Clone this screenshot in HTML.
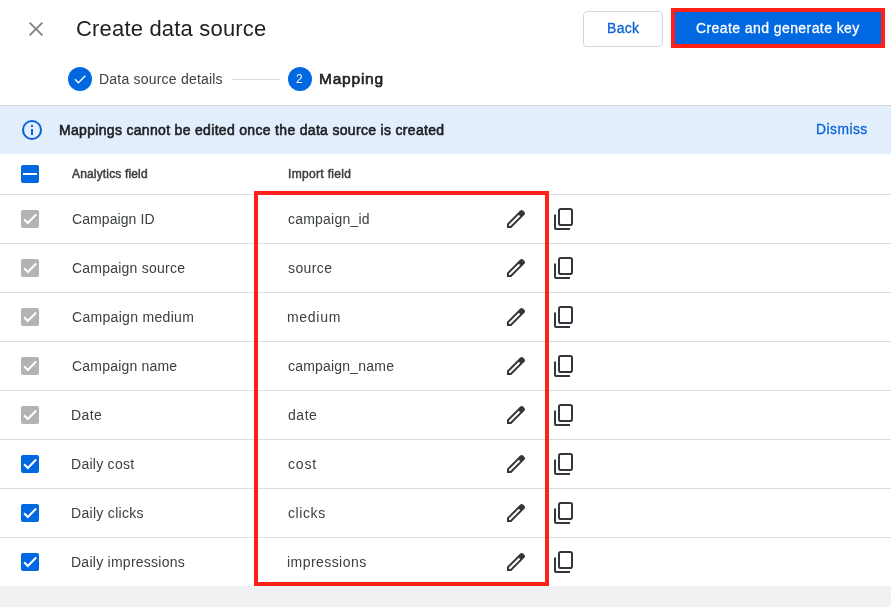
<!DOCTYPE html>
<html lang="en">
<head>
<meta charset="utf-8">
<title>Create data source</title>
<style>
*{box-sizing:border-box;margin:0;padding:0}
html,body{width:891px;height:607px;overflow:hidden;background:#eff1f3}
body{position:relative;font-family:"Liberation Sans",Arial,sans-serif;color:#202124}
.abs{position:absolute}
.t{position:absolute;white-space:nowrap;line-height:1;will-change:transform}
#top{left:0;top:0;width:891px;height:105px;background:#fff}
#title{left:77px;top:18px;font-size:22px;color:#202124}
#back{left:583px;top:11px;width:80px;height:36px;border:1px solid #d5d8dd;border-radius:4px;background:#fff}
#backt{left:608px;top:21px;font-size:14px;color:#0a62da;-webkit-text-stroke:0.3px #0a62da}
#cgk{left:671px;top:8px;width:214px;height:40px;background:#0068e1;border:4px solid #ff2018}
#cgkt{left:696px;top:21px;font-size:14px;color:#fff;-webkit-text-stroke:0.3px #fff}
.circ{width:24px;height:24px;border-radius:50%;background:#0068e1}
#s1t{left:100px;top:72px;font-size:14px;color:#3c4043}
#conn{left:232px;top:79px;width:48px;height:1px;background:#dadce0}
#s2n{left:296px;top:73px;font-size:12px;color:#fff}
#s2t{left:320px;top:71px;font-size:15.5px;-webkit-text-stroke:0.62px #202124;color:#202124}
#bannerline{left:0;top:105px;width:891px;height:1px;background:#d3d5d8}
#banner{left:0;top:106px;width:891px;height:48px;background:#e3eefc}
#bt{left:60px;top:123px;font-size:14px;-webkit-text-stroke:0.58px #202124;color:#202124}
#dis{left:816px;top:123px;font-size:13.8px;color:#0a62da;-webkit-text-stroke:0.3px #0a62da}
#table{left:0;top:154px;width:891px;height:432px;background:#fff}
.line{left:0;width:891px;height:1px;background:#dadce0}
.hdr{font-size:12px;-webkit-text-stroke:0.48px #3c4043;color:#3c4043;top:168px}
.cb{left:21px;width:18px;height:18px;border-radius:2px}
.cb.g{background:#b1b3b5}
.cb.b{background:#0068e1}
.lab{left:72px;font-size:14px;color:#3c4043}
.val{left:288px;font-size:14px;color:#3c4043}
.ic{width:24px;height:24px}
#redbox{left:254px;top:191px;width:295px;height:395px;border:4px solid #ff2018}
</style>
</head>
<body>
<div id="top" class="abs"></div>
<svg class="abs" style="left:24px;top:17px" width="24" height="24" viewBox="0 0 24 24"><path d="M5.6 5.6L18.4 18.400M18.400 5.600L5.600 18.400" stroke="#80868b" stroke-width="1.9" fill="none"/></svg>
<div id="title" class="t" style="letter-spacing:0.186px;margin-left:-1px">Create data source</div>
<div id="back" class="abs"></div>
<div id="backt" class="t" style="letter-spacing:0.299px;margin-left:-1px">Back</div>
<div id="cgk" class="abs"></div>
<div id="cgkt" class="t" style="letter-spacing:0.417px;margin-left:0px">Create and generate key</div>

<div class="abs circ" style="left:68px;top:67px"></div>
<svg class="abs" style="left:72px;top:71px" width="16" height="16" viewBox="0 0 24 24"><path d="M4.5 12.500L9.500 17.500L20 7" stroke="#fff" stroke-width="2.1" fill="none"/></svg>
<div id="s1t" class="t" style="letter-spacing:0.210px;margin-left:-1px">Data source details</div>
<div id="conn" class="abs"></div>
<div class="abs circ" style="left:288px;top:67px"></div>
<div id="s2n" class="t">2</div>
<div id="s2t" class="t" style="letter-spacing:0.776px;margin-left:-1px">Mapping</div>

<div id="bannerline" class="abs"></div>
<div id="banner" class="abs"></div>
<svg class="abs" style="left:20px;top:118px" width="24" height="24" viewBox="0 0 24 24"><circle cx="12" cy="12" r="9" fill="none" stroke="#0a62da" stroke-width="2"/><rect x="11" y="11" width="2" height="6" fill="#0a62da"/><rect x="11" y="7" width="2" height="2" fill="#0a62da"/></svg>
<div id="bt" class="t" style="letter-spacing:0.317px;margin-left:-1px">Mappings cannot be edited once the data source is created</div>
<div id="dis" class="t" style="letter-spacing:0.495px;margin-left:0px">Dismiss</div>

<div id="table" class="abs"></div>
<div class="abs cb b" style="top:165px"></div>
<div class="abs" style="left:23px;top:173px;width:14px;height:2px;background:#fff"></div>
<div id="h1" class="t hdr" style="letter-spacing:0.161px;margin-left:0px;left:72px">Analytics field</div>
<div id="h2" class="t hdr" style="letter-spacing:0.327px;margin-left:0px;left:288px">Import field</div>
<div class="abs line" style="top:194px"></div>
<div class="abs cb g" style="top:210px"></div>
<svg class="abs" style="left:21px;top:210px" width="18" height="18" viewBox="0 0 18 18"><path d="M3.100 9.300L6.800 13L15.200 4.600" fill="none" stroke="#fff" stroke-width="2.100"/></svg>
<div class="t lab" id="l0" style="top:212px;letter-spacing:0.080px;margin-left:0px">Campaign ID</div>
<div class="t val" id="v0" style="top:212px;letter-spacing:0.218px;margin-left:0px">campaign_id</div>
<svg class="abs" style="left:504px;top:207px" width="24" height="24" viewBox="0 -960 960 960"><path fill="#33363a" d="M200-200h57l391-391-57-57-391 391v57Zm-80 80v-170l528-527q12-11 26.500-17t30.500-6q16 0 31 6t26 18l55 56q12 11 17.500 26t5.500 30q0 16-5.500 30.500T817-647L290-120H120Zm640-584-56-56 56 56Zm-141 85-28-29 57 57-29-28Z"/></svg>
<svg class="abs" style="left:552px;top:207px" width="24" height="24" viewBox="0 0 24 24" fill="none" stroke="#33363a" stroke-width="2"><rect x="7" y="2" width="13" height="16" rx="1.800"/><path d="M3 7.500V21a1 1 0 0 0 1 1H18" /></svg>
<div class="abs line" style="top:243px"></div>
<div class="abs cb g" style="top:259px"></div>
<svg class="abs" style="left:21px;top:259px" width="18" height="18" viewBox="0 0 18 18"><path d="M3.100 9.300L6.800 13L15.200 4.600" fill="none" stroke="#fff" stroke-width="2.100"/></svg>
<div class="t lab" id="l1" style="top:261px;letter-spacing:0.228px;margin-left:0px">Campaign source</div>
<div class="t val" id="v1" style="top:261px;letter-spacing:0.382px;margin-left:0px">source</div>
<svg class="abs" style="left:504px;top:256px" width="24" height="24" viewBox="0 -960 960 960"><path fill="#33363a" d="M200-200h57l391-391-57-57-391 391v57Zm-80 80v-170l528-527q12-11 26.500-17t30.500-6q16 0 31 6t26 18l55 56q12 11 17.500 26t5.500 30q0 16-5.500 30.500T817-647L290-120H120Zm640-584-56-56 56 56Zm-141 85-28-29 57 57-29-28Z"/></svg>
<svg class="abs" style="left:552px;top:256px" width="24" height="24" viewBox="0 0 24 24" fill="none" stroke="#33363a" stroke-width="2"><rect x="7" y="2" width="13" height="16" rx="1.800"/><path d="M3 7.500V21a1 1 0 0 0 1 1H18" /></svg>
<div class="abs line" style="top:292px"></div>
<div class="abs cb g" style="top:308px"></div>
<svg class="abs" style="left:21px;top:308px" width="18" height="18" viewBox="0 0 18 18"><path d="M3.100 9.300L6.800 13L15.200 4.600" fill="none" stroke="#fff" stroke-width="2.100"/></svg>
<div class="t lab" id="l2" style="top:310px;letter-spacing:0.308px;margin-left:0px">Campaign medium</div>
<div class="t val" id="v2" style="top:310px;letter-spacing:0.707px;margin-left:-1px">medium</div>
<svg class="abs" style="left:504px;top:305px" width="24" height="24" viewBox="0 -960 960 960"><path fill="#33363a" d="M200-200h57l391-391-57-57-391 391v57Zm-80 80v-170l528-527q12-11 26.500-17t30.500-6q16 0 31 6t26 18l55 56q12 11 17.500 26t5.500 30q0 16-5.500 30.500T817-647L290-120H120Zm640-584-56-56 56 56Zm-141 85-28-29 57 57-29-28Z"/></svg>
<svg class="abs" style="left:552px;top:305px" width="24" height="24" viewBox="0 0 24 24" fill="none" stroke="#33363a" stroke-width="2"><rect x="7" y="2" width="13" height="16" rx="1.800"/><path d="M3 7.500V21a1 1 0 0 0 1 1H18" /></svg>
<div class="abs line" style="top:341px"></div>
<div class="abs cb g" style="top:357px"></div>
<svg class="abs" style="left:21px;top:357px" width="18" height="18" viewBox="0 0 18 18"><path d="M3.100 9.300L6.800 13L15.200 4.600" fill="none" stroke="#fff" stroke-width="2.100"/></svg>
<div class="t lab" id="l3" style="top:359px;letter-spacing:0.200px;margin-left:0px">Campaign name</div>
<div class="t val" id="v3" style="top:359px;letter-spacing:0.202px;margin-left:0px">campaign_name</div>
<svg class="abs" style="left:504px;top:354px" width="24" height="24" viewBox="0 -960 960 960"><path fill="#33363a" d="M200-200h57l391-391-57-57-391 391v57Zm-80 80v-170l528-527q12-11 26.500-17t30.500-6q16 0 31 6t26 18l55 56q12 11 17.500 26t5.500 30q0 16-5.500 30.500T817-647L290-120H120Zm640-584-56-56 56 56Zm-141 85-28-29 57 57-29-28Z"/></svg>
<svg class="abs" style="left:552px;top:354px" width="24" height="24" viewBox="0 0 24 24" fill="none" stroke="#33363a" stroke-width="2"><rect x="7" y="2" width="13" height="16" rx="1.800"/><path d="M3 7.500V21a1 1 0 0 0 1 1H18" /></svg>
<div class="abs line" style="top:390px"></div>
<div class="abs cb g" style="top:406px"></div>
<svg class="abs" style="left:21px;top:406px" width="18" height="18" viewBox="0 0 18 18"><path d="M3.100 9.300L6.800 13L15.200 4.600" fill="none" stroke="#fff" stroke-width="2.100"/></svg>
<div class="t lab" id="l4" style="top:408px;letter-spacing:0.374px;margin-left:-1px">Date</div>
<div class="t val" id="v4" style="top:408px;letter-spacing:0.533px;margin-left:0px">date</div>
<svg class="abs" style="left:504px;top:403px" width="24" height="24" viewBox="0 -960 960 960"><path fill="#33363a" d="M200-200h57l391-391-57-57-391 391v57Zm-80 80v-170l528-527q12-11 26.500-17t30.500-6q16 0 31 6t26 18l55 56q12 11 17.500 26t5.500 30q0 16-5.500 30.500T817-647L290-120H120Zm640-584-56-56 56 56Zm-141 85-28-29 57 57-29-28Z"/></svg>
<svg class="abs" style="left:552px;top:403px" width="24" height="24" viewBox="0 0 24 24" fill="none" stroke="#33363a" stroke-width="2"><rect x="7" y="2" width="13" height="16" rx="1.800"/><path d="M3 7.500V21a1 1 0 0 0 1 1H18" /></svg>
<div class="abs line" style="top:439px"></div>
<div class="abs cb b" style="top:455px"></div>
<svg class="abs" style="left:21px;top:455px" width="18" height="18" viewBox="0 0 18 18"><path d="M3.100 9.300L6.800 13L15.200 4.600" fill="none" stroke="#fff" stroke-width="2.100"/></svg>
<div class="t lab" id="l5" style="top:457px;letter-spacing:0.267px;margin-left:-1px">Daily cost</div>
<div class="t val" id="v5" style="top:457px;letter-spacing:0.838px;margin-left:0px">cost</div>
<svg class="abs" style="left:504px;top:452px" width="24" height="24" viewBox="0 -960 960 960"><path fill="#33363a" d="M200-200h57l391-391-57-57-391 391v57Zm-80 80v-170l528-527q12-11 26.500-17t30.500-6q16 0 31 6t26 18l55 56q12 11 17.500 26t5.500 30q0 16-5.500 30.500T817-647L290-120H120Zm640-584-56-56 56 56Zm-141 85-28-29 57 57-29-28Z"/></svg>
<svg class="abs" style="left:552px;top:452px" width="24" height="24" viewBox="0 0 24 24" fill="none" stroke="#33363a" stroke-width="2"><rect x="7" y="2" width="13" height="16" rx="1.800"/><path d="M3 7.500V21a1 1 0 0 0 1 1H18" /></svg>
<div class="abs line" style="top:488px"></div>
<div class="abs cb b" style="top:504px"></div>
<svg class="abs" style="left:21px;top:504px" width="18" height="18" viewBox="0 0 18 18"><path d="M3.100 9.300L6.800 13L15.200 4.600" fill="none" stroke="#fff" stroke-width="2.100"/></svg>
<div class="t lab" id="l6" style="top:506px;letter-spacing:0.308px;margin-left:-1px">Daily clicks</div>
<div class="t val" id="v6" style="top:506px;letter-spacing:0.585px;margin-left:0px">clicks</div>
<svg class="abs" style="left:504px;top:501px" width="24" height="24" viewBox="0 -960 960 960"><path fill="#33363a" d="M200-200h57l391-391-57-57-391 391v57Zm-80 80v-170l528-527q12-11 26.500-17t30.500-6q16 0 31 6t26 18l55 56q12 11 17.500 26t5.500 30q0 16-5.500 30.500T817-647L290-120H120Zm640-584-56-56 56 56Zm-141 85-28-29 57 57-29-28Z"/></svg>
<svg class="abs" style="left:552px;top:501px" width="24" height="24" viewBox="0 0 24 24" fill="none" stroke="#33363a" stroke-width="2"><rect x="7" y="2" width="13" height="16" rx="1.800"/><path d="M3 7.500V21a1 1 0 0 0 1 1H18" /></svg>
<div class="abs line" style="top:537px"></div>
<div class="abs cb b" style="top:553px"></div>
<svg class="abs" style="left:21px;top:553px" width="18" height="18" viewBox="0 0 18 18"><path d="M3.100 9.300L6.800 13L15.200 4.600" fill="none" stroke="#fff" stroke-width="2.100"/></svg>
<div class="t lab" id="l7" style="top:555px;letter-spacing:0.257px;margin-left:-1px">Daily impressions</div>
<div class="t val" id="v7" style="top:555px;letter-spacing:0.444px;margin-left:-1px">impressions</div>
<svg class="abs" style="left:504px;top:550px" width="24" height="24" viewBox="0 -960 960 960"><path fill="#33363a" d="M200-200h57l391-391-57-57-391 391v57Zm-80 80v-170l528-527q12-11 26.500-17t30.500-6q16 0 31 6t26 18l55 56q12 11 17.500 26t5.500 30q0 16-5.500 30.500T817-647L290-120H120Zm640-584-56-56 56 56Zm-141 85-28-29 57 57-29-28Z"/></svg>
<svg class="abs" style="left:552px;top:550px" width="24" height="24" viewBox="0 0 24 24" fill="none" stroke="#33363a" stroke-width="2"><rect x="7" y="2" width="13" height="16" rx="1.800"/><path d="M3 7.500V21a1 1 0 0 0 1 1H18" /></svg>
<div id="redbox" class="abs"></div>
</body>
</html>
